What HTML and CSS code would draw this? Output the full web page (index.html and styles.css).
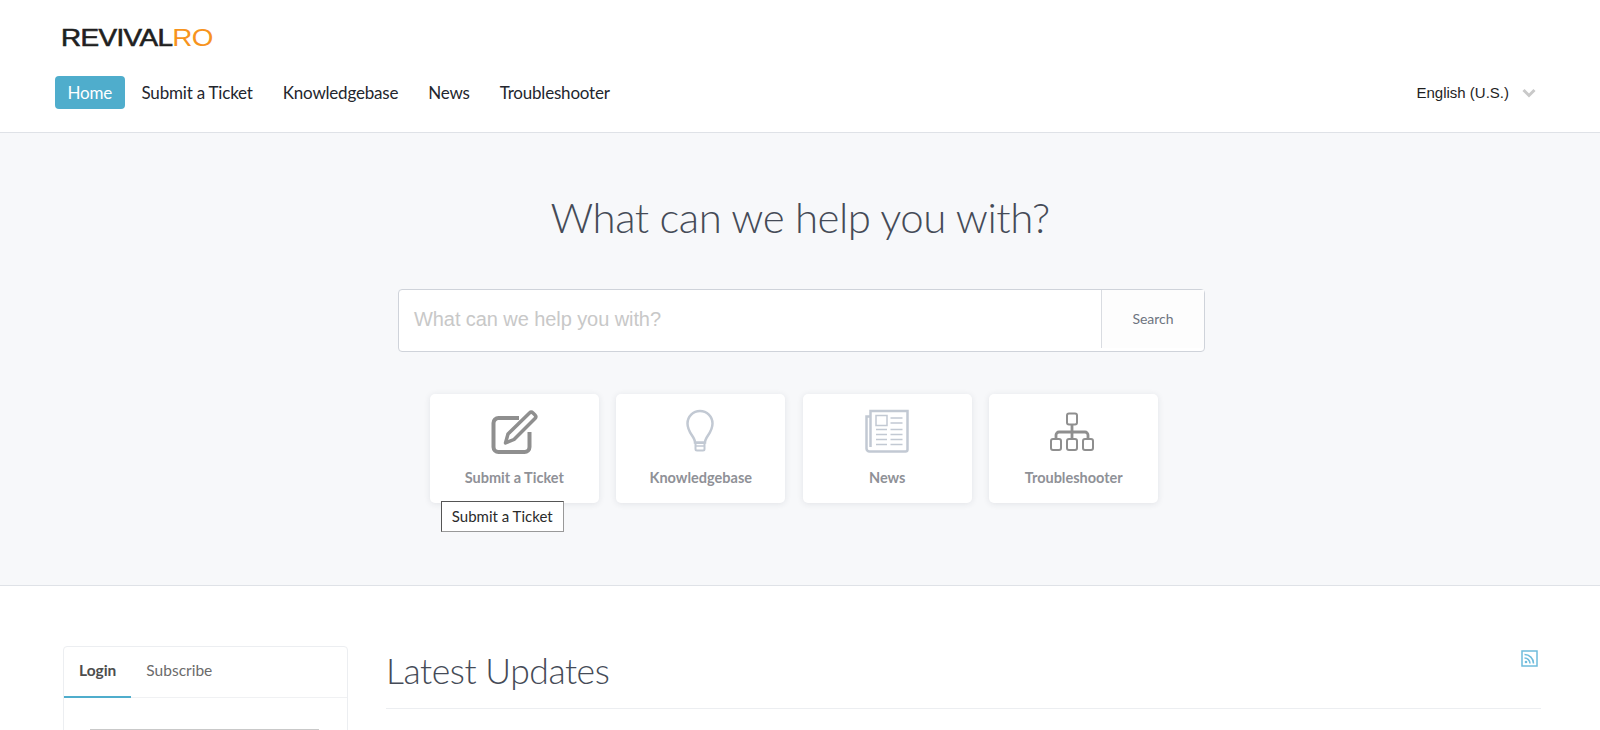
FILE: index.html
```
<!DOCTYPE html>
<html lang="en">
<head>
<meta charset="utf-8">
<title>RevivalRO Help Center</title>
<link rel="stylesheet" href="styles.css">
</head>
<body>
<header class="site-header">
  <div class="logo"><div class="logo-mark"><span class="logo-dark">REVIVAL</span><span class="logo-orange">RO</span></div></div>
  <div class="nav-row">
    <nav class="nav">
      <a class="nav-link active">Home</a>
      <a class="nav-link">Submit a Ticket</a>
      <a class="nav-link">Knowledgebase</a>
      <a class="nav-link">News</a>
      <a class="nav-link">Troubleshooter</a>
    </nav>
    <div class="lang">
      <span>English (U.S.)</span>
      <svg class="chev" width="14" height="10" viewBox="0 0 14 10"><path d="M1.500 2 7 7.500 12.500 2" fill="none" stroke="#c9c9c9" stroke-width="3"/></svg>
    </div>
  </div>
</header>
<section class="hero">
  <h1 class="hero-title">What can we help you with?</h1>
  <form class="search">
    <div class="search-input">What can we help you with?</div>
    <div class="search-btn">Search</div>
  </form>
  <div class="cards">
    <div class="card">
      <svg class="card-icon" width="48" height="48" viewBox="0 0 48 48" fill="none" stroke="#8f8f8f">
        <path d="M39.500 24v15a5 5 0 0 1-5 5h-26a5 5 0 0 1-5-5V15a5 5 0 0 1 5-5H29" stroke-width="4"/>
        <path d="M15.500 35l2.500-9L39.500 5a2.500 2.500 0 0 1 3.500 0l2 2a2.500 2.500 0 0 1 0 3.500L24 31.500z" stroke-width="3.500" stroke-linejoin="round"/>
      </svg>
      <div class="card-label">Submit a Ticket</div>
      <div class="tooltip">Submit a Ticket</div>
    </div>
    <div class="card">
      <svg class="card-icon" width="48" height="48" viewBox="0 0 48 48" fill="none" stroke="#c2c9d3" stroke-width="2.500">
        <path d="M18 34.500c0-6-7.500-9.500-7.500-19a12.500 12.500 0 0 1 25 0c0 9.500-7.500 13-7.500 19z"/>
        <path d="M18.500 35h9v6a1.500 1.500 0 0 1-1.500 1.500h-6a1.500 1.500 0 0 1-1.500-1.500z" stroke-width="2"/>
        <path d="M19 38h8" stroke-width="1.500"/>
      </svg>
      <div class="card-label">Knowledgebase</div>
    </div>
    <div class="card">
      <svg class="card-icon" width="48" height="48" viewBox="0 0 48 48" fill="none" stroke="#c2c9d3">
        <path d="M7.500 8.500H3.500v32a3 3 0 0 0 3 3H42.500a2 2 0 0 0 2-2V3H7.500v36" stroke-width="2.500"/>
        <rect x="13" y="7.500" width="11" height="10" stroke-width="1.500"/>
        <path d="M27.500 10h12M27.500 15h12M13 21.500h11M27.500 21.500h12M13 26.500h11M27.500 26.500h12M13 31.500h11M27.500 31.500h12M13 36.500h11M27.500 36.500h12" stroke-width="1.300"/>
      </svg>
      <div class="card-label">News</div>
    </div>
    <div class="card">
      <svg class="card-icon" width="48" height="48" viewBox="0 0 48 48" fill="none" stroke="#8f8f8f">
        <rect x="17" y="5.500" width="10" height="11" rx="2" stroke-width="2"/>
        <rect x="1" y="31" width="10" height="11" rx="2" stroke-width="2"/>
        <rect x="17" y="31" width="10" height="11" rx="2" stroke-width="2"/>
        <rect x="33" y="31" width="10" height="11" rx="2" stroke-width="2"/>
        <path d="M22 17v14M6 31v-4a3 3 0 0 1 3-3h26a3 3 0 0 1 3 3v4" stroke-width="2.800"/>
      </svg>
      <div class="card-label">Troubleshooter</div>
    </div>
  </div>
</section>
<main class="content">
  <aside class="sidebar">
    <div class="tabs">
      <div class="tab tab-active">Login</div>
      <div class="tab">Subscribe</div>
    </div>
    <div class="sidebar-body"><div class="login-input"></div></div>
  </aside>
  <section class="updates">
    <div class="updates-head">
      <h2 class="updates-title">Latest Updates</h2>
      <svg class="rss" width="17" height="17" viewBox="0 0 17 17" fill="none" stroke="#6fbcdc">
        <rect x="1" y="1" width="15" height="15" stroke-width="1.500"/>
        <circle cx="5" cy="12" r="1.300" fill="#6fbcdc" stroke="none"/>
        <path d="M3.500 8a5.500 5.500 0 0 1 5.500 5.500M3.500 4.500a9 9 0 0 1 9 9" stroke-width="1.500"/>
      </svg>
    </div>
  </section>
</main>
</body>
</html>
```
FILE: styles.css
```
* { box-sizing: border-box; }
html, body { margin: 0; height: 730px; overflow: hidden; background: #fff; }
body { font-family: "Lato", "Liberation Sans", sans-serif; color: #2b2f38; }

.site-header { height: 133px; border-bottom: 1px solid #dfe2e7; padding: 29px 55px 0; }
.logo { margin-left: 6px; height: 47px; }
.logo-mark { display: inline-block; transform: scaleX(1.21); transform-origin: left center; font-family: "Liberation Sans", sans-serif; font-size: 23px; line-height: 19px; letter-spacing: -0.5px; }
.logo-dark { color: #1f1f1f; -webkit-text-stroke: 0.6px #1f1f1f; }
.logo-orange { color: #f7941d; }
.nav-row { display: flex; justify-content: space-between; align-items: center; }
.nav { display: flex; align-items: center; gap: 4px; }
.nav-link { font-size: 17px; line-height: 33px; letter-spacing: -0.2px; padding: 0 13px; border-radius: 4px; color: #23262e; }
.nav-link.active { padding: 0 12.5px; background: #4fadcc; color: #fff; }
.lang { display: flex; align-items: center; gap: 13px; padding-right: 9px; font-family: "Liberation Sans", sans-serif; font-size: 15px; color: #1e1e1e; }
.chev { display: block; }

.hero { height: 453px; background: #f7f8fa; border-bottom: 1px solid #dfe2e7; padding-top: 54px; display: flex; flex-direction: column; align-items: center; }
.hero-title { margin: 0; font-size: 42px; line-height: 60px; font-weight: 300; letter-spacing: -0.5px; color: #454b57; }
.search { display: flex; width: 807px; height: 63px; margin: 42px 0 0 3px; background: #fff; border: 1px solid #cfd3da; border-radius: 4px; }
.search-input { flex: 1; padding-left: 15px; font-family: "Liberation Sans", sans-serif; font-size: 20px; line-height: 58px; letter-spacing: -0.08px; color: #c8c8c8; }
.search-btn { width: 103px; height: 58px; border-left: 1px solid #d9dce1; background: #fdfdfd; text-align: center; font-size: 14px; line-height: 58px; color: #6d7480; }
.cards { display: flex; gap: 17.5px; margin-top: 42px; margin-right: 12px; }
.card { position: relative; width: 169px; height: 109px; padding-top: 14px; background: #fff; border-radius: 5px; box-shadow: 0 1px 6px rgba(40, 50, 70, 0.1); display: flex; flex-direction: column; align-items: center; }
.card-icon { display: block; overflow: visible; }
.card-label { margin-top: 13px; font-size: 14.5px; line-height: 18px; font-weight: 700; color: #8f9197; }
.tooltip { position: absolute; left: 11px; top: 107px; width: 123px; height: 31px; background: #fff; border: 1px solid #999; border-top-color: #555; border-left-color: #555; font-size: 15px; font-weight: 400; line-height: 29px; text-align: center; color: #2b2b2b; }

.content { display: flex; padding: 60px 59px 0 63px; gap: 38px; }
.sidebar { width: 285px; height: 200px; border: 1px solid #eceef1; border-radius: 4px; flex: none; }
.tabs { display: flex; height: 51px; border-bottom: 1px solid #f0f1f3; }
.tab { padding: 0 15px; font-size: 15.5px; line-height: 46px; color: #6b6b6b; }
.tab-active { font-weight: 700; color: #4d4d4d; height: 51px; border-bottom: 2px solid #4fadcc; }
.sidebar-body { padding: 31px 28px 0 26px; }
.login-input { height: 30px; border-top: 1px solid #c9c9c9; }
.updates { flex: 1; }
.updates-head { display: flex; justify-content: space-between; align-items: flex-start; height: 63px; border-bottom: 1px solid #eceef1; }
.updates-title { margin: 0; font-size: 35.5px; line-height: 50px; font-weight: 300; letter-spacing: -0.45px; color: #454b57; }
.rss { display: block; margin-top: 4px; margin-right: 3px; }
```
